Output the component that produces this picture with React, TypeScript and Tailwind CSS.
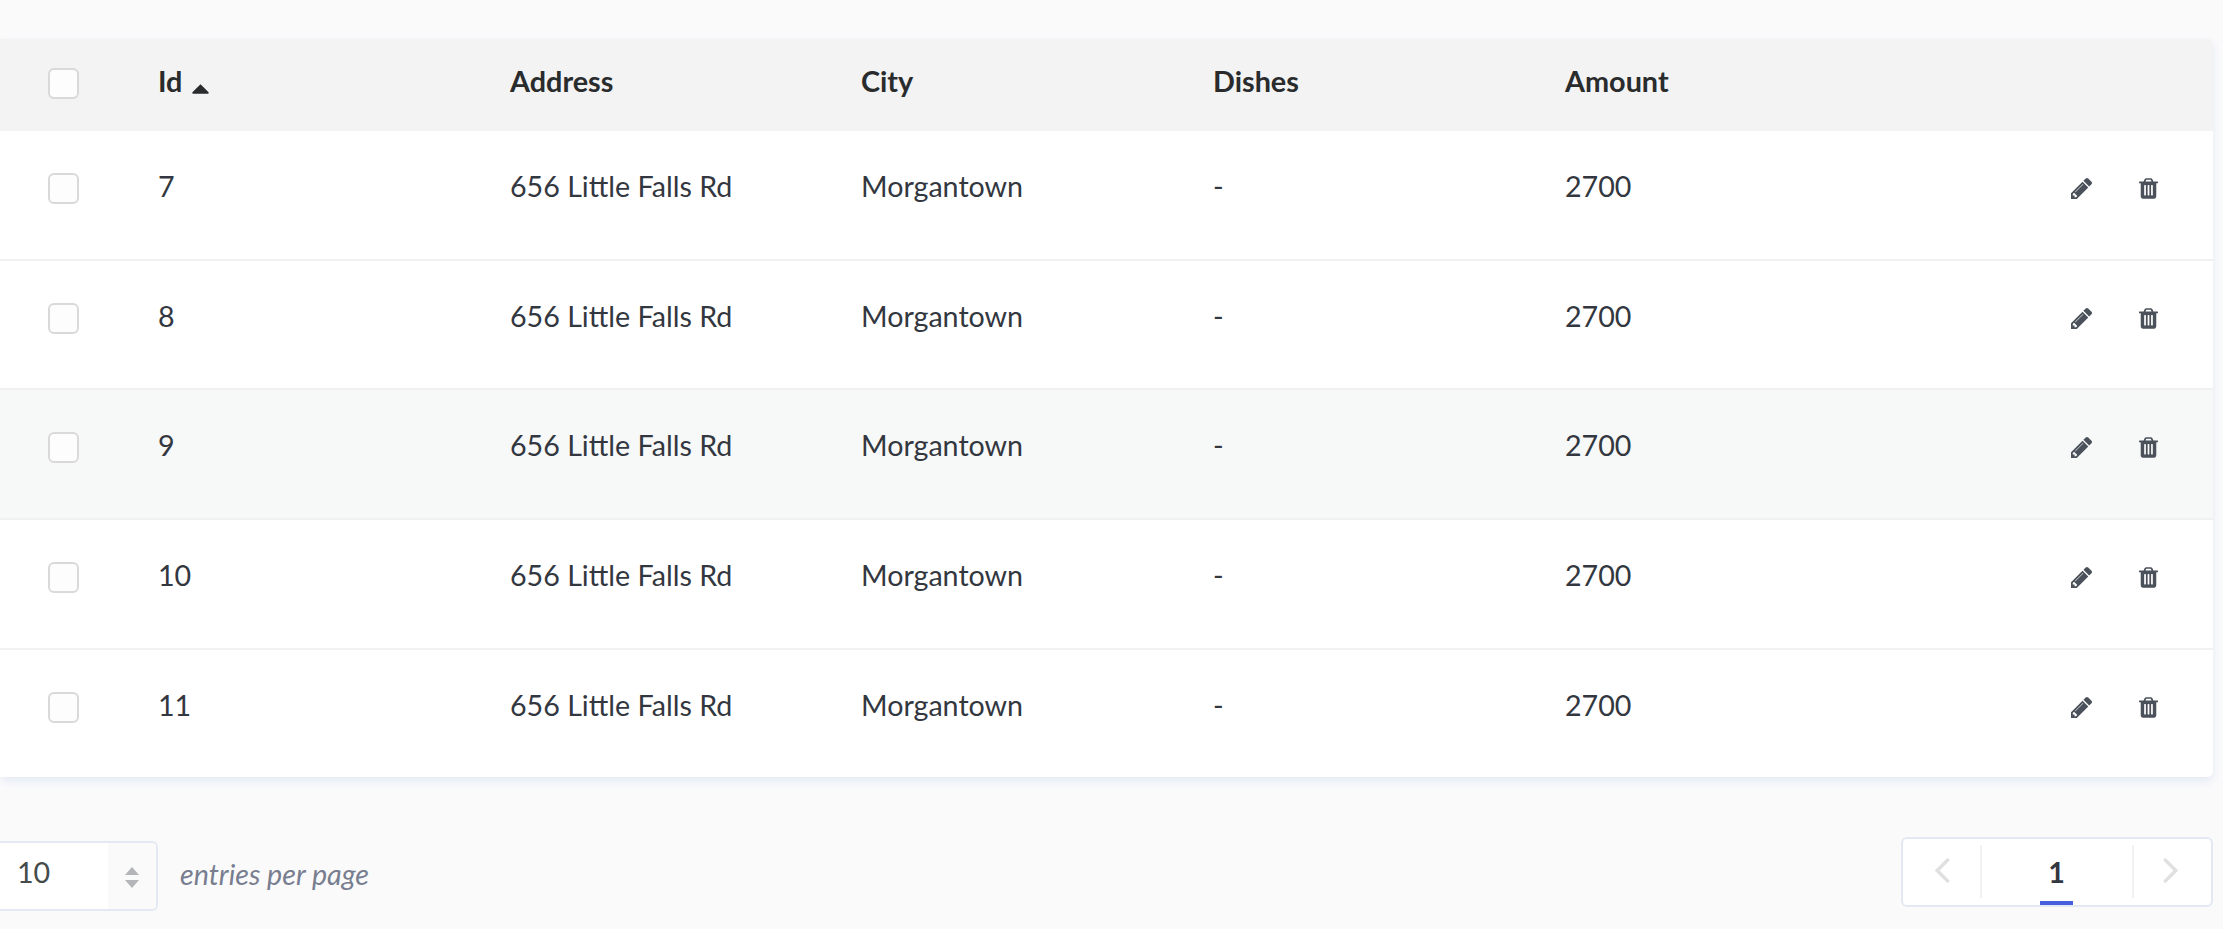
const COLUMNS = "grid grid-cols-[157px_352px_352px_352px_352px_1fr]";

const rows = [
  { id: 7, height: "h-[130px]" },
  { id: 8, height: "h-[129px]" },
  { id: 9, height: "h-[130px]", active: true },
  { id: 10, height: "h-[130px]" },
  { id: 11, height: "h-[127px]", last: true },
];

function Checkbox() {
  return (
    <span
      role="checkbox"
      aria-checked="false"
      className="block size-[31px] rounded-[6px] border-2 border-[#d9d9d9] bg-[#fdfdfd]"
    />
  );
}

function PencilIcon() {
  return (
    <svg viewBox="128 149 1515 1515" className="h-[21px] w-[21px]" fill="currentColor">
      <path d="M491 1536l91-91-235-235-91 91v107h128v128h107zm523-928q0-22-22-22-10 0-17 7l-542 542q-7 7-7 17 0 22 22 22 10 0 17-7l542-542q7-7 7-17zm-54-192l416 416-832 832h-416v-416zm683 96q0 53-37 90l-166 166-416-416 166-165q36-38 90-38 53 0 91 38l235 234q37 39 37 91z" />
    </svg>
  );
}

function TrashIcon() {
  return (
    <svg viewBox="192 128 1408 1536" className="h-[21px] w-[19px]" fill="currentColor">
      <path d="M704 1376v-704q0-14-9-23t-23-9h-64q-14 0-23 9t-9 23v704q0 14 9 23t23 9h64q14 0 23-9t9-23zm256 0v-704q0-14-9-23t-23-9h-64q-14 0-23 9t-9 23v704q0 14 9 23t23 9h64q14 0 23-9t9-23zm256 0v-704q0-14-9-23t-23-9h-64q-14 0-23 9t-9 23v704q0 14 9 23t23 9h64q14 0 23-9t9-23zm-544-992h448l-48-117q-7-9-17-11h-317q-10 2-17 11zm928 32v64q0 14-9 23t-23 9h-96v948q0 83-47 143.5t-113 60.5h-832q-66 0-113-58.5t-47-141.5v-952h-96q-14 0-23-9t-9-23v-64q0-14 9-23t23-9h309l70-167q15-37 54-63t79-26h320q40 0 79 26t54 63l70 167h309q14 0 23 9t9 23z" />
    </svg>
  );
}

function Chevron({ d }: { d: string }) {
  return (
    <svg
      viewBox="0 0 15 25"
      className="h-[25px] w-[15px]"
      fill="none"
      stroke="#e0e0e0"
      strokeWidth="3.4"
      strokeLinecap="round"
    >
      <path d={d} />
    </svg>
  );
}

export default function App() {
  return (
    <div className="h-[929px] w-[2223px] overflow-hidden bg-[#fafafb] pt-[39px] font-['Lato',sans-serif] text-[28.65px] leading-[36px] text-[#333740] antialiased">
      <div className="w-[2213px] rounded-[6px] shadow-[0_4px_8px_0_#e3e9f3]">
        <div
          className={`${COLUMNS} h-[92px] rounded-tr-[6px] bg-[#f3f3f3] text-[28.8px] leading-[36px] font-bold text-[#292b2c]`}
        >
          <div className="pt-[29px] pl-[48px]">
            <Checkbox />
          </div>
          <div className="flex pt-[24px] pl-px">
            Id
            <svg viewBox="0 0 17 10" className="mt-[21px] ml-[10px] h-[10px] w-[17px]" fill="currentColor">
              <path d="M8.5 0.3L16.6 8.2Q17 9.7 15.8 9.7H1.2Q0 9.7 0.4 8.2Z" />
            </svg>
          </div>
          <div className="pt-[24px] pl-px">Address</div>
          <div className="pt-[24px]">City</div>
          <div className="pt-[24px]">Dishes</div>
          <div className="pt-[24px]">Amount</div>
        </div>

        {rows.map((row) => (
          <div
            key={row.id}
            className={`${COLUMNS} ${row.height} ${row.active ? "bg-[#f7f8f8]" : "bg-white"} ${
              row.last ? "rounded-br-[6px]" : "border-b-2 border-[#f1f1f2]"
            }`}
          >
            <div className="pt-[42px] pl-[48px]">
              <Checkbox />
            </div>
            <div className="pt-[37px] pl-px">{row.id}</div>
            <div className="pt-[37px] pl-px">656 Little Falls Rd</div>
            <div className="pt-[37px]">Morgantown</div>
            <div className="pt-[37px]">-</div>
            <div className="flex items-start justify-between">
              <span className="pt-[37px]">2700</span>
              <div className="flex gap-[47px] pt-[47px] pr-[55px] text-[#4b515a]">
                <PencilIcon />
                <TrashIcon />
              </div>
            </div>
          </div>
        ))}
      </div>

      <div className="flex w-[2213px] items-start justify-between pt-[60px]">
        <div className="flex pt-[4px]">
          <div className="flex h-[70px] w-[158px] rounded-r-[6px] border-y-2 border-r-2 border-[#e3e9f3] bg-white">
            <div className="w-[108px] pt-[11px] pl-[17px] text-[#464b4c]">10</div>
            <div className="flex flex-1 flex-col items-center gap-[5px] rounded-r-[4px] bg-[#fafafb] pt-[24px]">
              <svg viewBox="0 0 14 8" className="h-[8px] w-[14px]" fill="#b3b5b9">
                <path d="M7 0L14 8H0Z" />
              </svg>
              <svg viewBox="0 0 14 8" className="h-[8px] w-[14px]" fill="#b3b5b9">
                <path d="M7 8L14 0H0Z" />
              </svg>
            </div>
          </div>
          <div className="pt-[15px] pl-[22px] text-[#787e8f] italic">entries per page</div>
        </div>

        <div className="flex h-[70px] w-[312px] rounded-[6px] border-2 border-[#e3e9f3] bg-white">
          <div className="mt-[6px] flex h-[53px] w-[79px] justify-end border-r-2 border-[#f1f1f2] pt-[13px] pr-[30px]">
            <Chevron d="M12.7 2L2.2 12.5L12.7 23" />
          </div>
          <div className="flex w-[150px] flex-col items-center justify-between pt-[15px] pr-px font-bold">
            <span>1</span>
            <span className="h-[4px] w-[33px] bg-[#465fdb]" />
          </div>
          <div className="mt-[6px] flex h-[53px] w-[79px] border-l-2 border-[#f1f1f2] pt-[13px] pl-[29px]">
            <Chevron d="M2.3 2L12.8 12.5L2.3 23" />
          </div>
        </div>
      </div>
    </div>
  );
}
